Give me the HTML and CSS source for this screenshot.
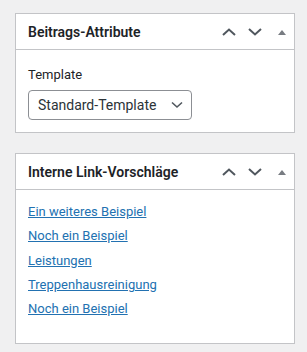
FILE: index.html
```html
<!DOCTYPE html>
<html lang="de">
<head>
<meta charset="utf-8">
<link rel="stylesheet" href="styles.css">
</head>
<body>
<div class="column">
  <div class="postbox">
    <div class="postbox-header">
      <h2 class="title">Beitrags-Attribute</h2>
      <div class="actions">
        <svg class="chev" viewBox="0 0 14 8" width="14" height="8"><path d="M1 7 L7 1.5 L13 7" fill="none" stroke="#50575e" stroke-width="2"/></svg>
        <svg class="chev" viewBox="0 0 14 8" width="14" height="8"><path d="M1 1 L7 6.5 L13 1" fill="none" stroke="#50575e" stroke-width="2"/></svg>
        <svg class="tri" viewBox="0 0 8 5" width="8" height="5"><path d="M4 0 L8 5 L0 5 Z" fill="#787c82"/></svg>
      </div>
    </div>
    <div class="inside attrs">
      <p class="label">Template</p>
      <div class="select">
        <span>Standard-Template</span>
        <svg viewBox="0 0 12 8" width="12" height="8"><path d="M1 1.5 L6 6 L11 1.5" fill="none" stroke="#50575e" stroke-width="1.6"/></svg>
      </div>
    </div>
  </div>
  <div class="postbox">
    <div class="postbox-header">
      <h2 class="title">Interne Link-Vorschläge</h2>
      <div class="actions">
        <svg class="chev" viewBox="0 0 14 8" width="14" height="8"><path d="M1 7 L7 1.5 L13 7" fill="none" stroke="#50575e" stroke-width="2"/></svg>
        <svg class="chev" viewBox="0 0 14 8" width="14" height="8"><path d="M1 1 L7 6.5 L13 1" fill="none" stroke="#50575e" stroke-width="2"/></svg>
        <svg class="tri" viewBox="0 0 8 5" width="8" height="5"><path d="M4 0 L8 5 L0 5 Z" fill="#787c82"/></svg>
      </div>
    </div>
    <div class="inside links">
      <a href="#">Ein weiteres Beispiel</a>
      <a href="#">Noch ein Beispiel</a>
      <a href="#">Leistungen</a>
      <a href="#">Treppenhausreinigung</a>
      <a href="#">Noch ein Beispiel</a>
    </div>
  </div>
</div>
</body>
</html>
```
FILE: styles.css
```css
html, body {
  margin: 0;
  background: #f0f0f1;
  font-family: Roboto, "Noto Sans", sans-serif;
  color: #1d2327;
}
.column {
  display: flex;
  flex-direction: column;
  gap: 20px;
  padding: 13px 12px 0 15px;
}
.postbox {
  background: #fff;
  border: 1px solid #c3c4c7;
}
.postbox-header {
  display: flex;
  align-items: center;
  justify-content: space-between;
  height: 34px;
  border-bottom: 1px solid #c3c4c7;
  padding: 1px 8px 0 12px;
}
.title {
  margin: 0;
  font-size: 14px;
  font-weight: 600;
}
.actions {
  display: flex;
  align-items: center;
  gap: 12px;
}
.tri { margin-left: 4px; }
.inside { padding: 0 12px; }
.attrs {
  height: 82px;
  box-sizing: border-box;
  padding-top: 16px;
}
.label {
  margin: 0 0 6px;
  font-size: 13px;
  line-height: 18px;
}
.select {
  width: 164px;
  height: 30px;
  box-sizing: border-box;
  border: 1px solid #8c8f94;
  border-radius: 4px;
  display: flex;
  align-items: center;
  justify-content: space-between;
  padding: 0 8px 0 9px;
  font-size: 14px;
  color: #2c3338;
}
.links {
  height: 153px;
  box-sizing: border-box;
  padding-top: 13px;
  display: flex;
  flex-direction: column;
  gap: 6.3px;
}
.links a {
  font-size: 13px;
  line-height: 18px;
  color: #2271b1;
  text-decoration: underline;
  align-self: flex-start;
}
```
